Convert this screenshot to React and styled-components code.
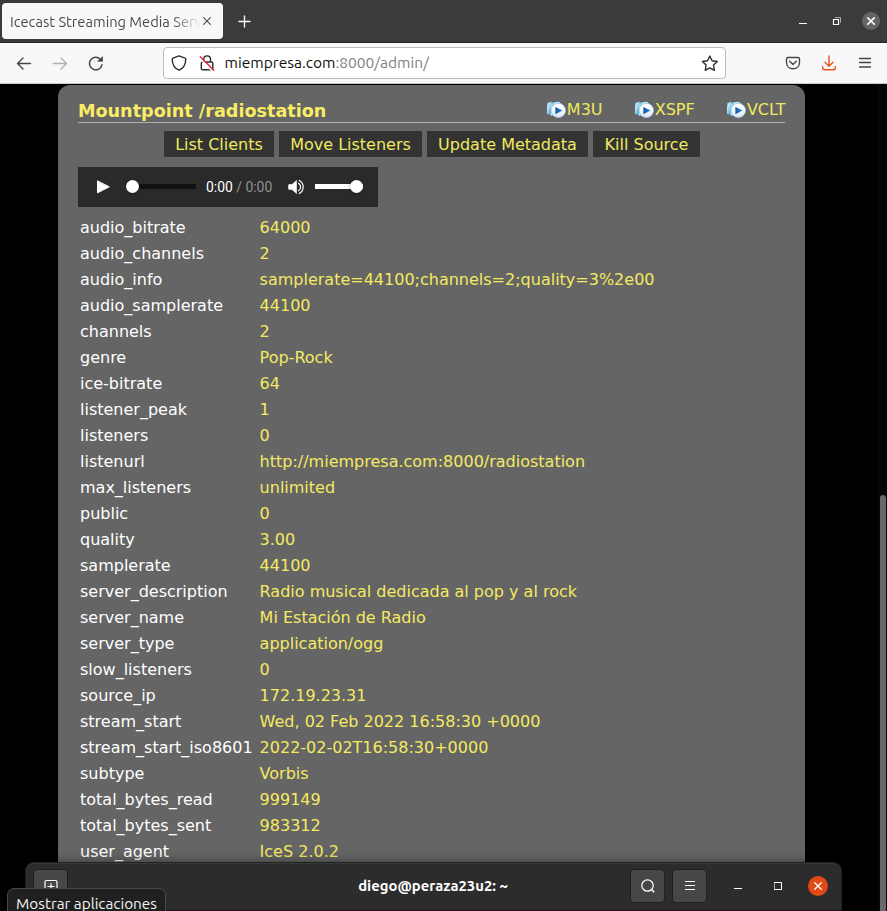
import React from "react";
import styled, { createGlobalStyle } from "styled-components";

const GlobalStyle = createGlobalStyle`
  * { box-sizing: border-box; }
  html, body { margin: 0; height: 100%; overflow: hidden; background: #000; }
`;

const ui = `"Ubuntu", "Noto Sans", sans-serif`;
const page = `"DejaVu Sans", sans-serif`;

const Screen = styled.div`
  position: relative;
  width: 887px;
  height: 911px;
  overflow: hidden;
  display: flex;
  flex-direction: column;
  background: #000;
  font-family: ${ui};
`;

const Icon = styled.svg`
  display: block;
  flex: none;
  fill: none;
  stroke: currentColor;
  stroke-linecap: ${(p) => p.$cap || "round"};
  stroke-linejoin: ${(p) => p.$join || "round"};
`;

const TabBar = styled.header`
  flex: none;
  height: 43px;
  display: flex;
  align-items: flex-start;
  background: #3d3b39;
  border-bottom: 1px solid #262524;
  color: #fff;
`;

const Tab = styled.div`
  width: 221px;
  height: 36px;
  margin: 3px 0 0 2px;
  padding: 0 12px 0 8px;
  display: flex;
  align-items: center;
  justify-content: space-between;
  border-radius: 4px;
  background: #f8f8f8;
  color: #4a4a4a;
`;

const TabTitle = styled.span`
  width: 192px;
  padding-top: 1px;
  white-space: nowrap;
  font-size: 14.67px;
  line-height: 24px;
  background: linear-gradient(90deg, #464646 162px, transparent 191px);
  background-clip: text;
  color: transparent;
`;

const NewTab = styled.div`
  padding: 15px 0 0 15px;
`;

const WindowControls = styled.div`
  display: flex;
  align-items: center;
  gap: 21px;
  margin-left: auto;
  height: 42px;
  padding-right: 7px;
`;

const CloseButton = styled.div`
  width: ${(p) => p.$size}px;
  height: ${(p) => p.$size}px;
  margin-left: ${(p) => p.$pull || 0}px;
  flex: none;
  border-radius: 50%;
  display: grid;
  place-items: center;
  color: #fff;
  background: ${(p) => p.$tone};
`;

const Toolbar = styled.nav`
  flex: none;
  height: 41px;
  padding: 0 14px 0 16px;
  display: flex;
  align-items: center;
  background: #f8f8f8;
  border-bottom: 1px solid #cacaca;
  color: #464646;
`;

const NavGroup = styled.div`
  display: flex;
  gap: 20px;
  width: 147px;
`;

const AddressBar = styled.div`
  width: 563px;
  height: 32px;
  padding: 0 7px 0 7px;
  display: flex;
  align-items: center;
  border: 1px solid #bcbcbc;
  border-radius: 4px;
  background: #fff;
  color: #2b2b2b;
`;

const Url = styled.span`
  flex: 1;
  margin-left: 9.5px;
  font-size: 15.55px;
  line-height: 24px;
  color: #808080;
`;

const Host = styled.span`
  color: #101010;
`;

const Lock = styled.div`
  margin-left: 12px;
`;

const ToolbarEnd = styled.div`
  margin-left: auto;
  display: flex;
  align-items: center;
  gap: 20px;
`;

const Viewport = styled.main`
  flex: 1;
  min-height: 0;
  display: flex;
  padding: 1px 0 0 58px;
  font-family: ${page};
  font-size: 16px;
`;

const Panel = styled.section`
  width: 747px;
  height: 860px;
  padding: 13px 20px 0;
  border-radius: 12px;
  background: #656565;
`;

const ScrollTrack = styled.div`
  width: 10px;
  margin: -1px 0 0 auto;
  padding: 411px 0 0 3px;
  background: #050507;
`;

const ScrollThumb = styled.div`
  width: 6px;
  height: 500px;
  border-radius: 3px;
  background: #686868;
`;

const MountHeader = styled.div`
  height: 25px;
  display: flex;
  align-items: flex-start;
  justify-content: space-between;
  border-bottom: 1px solid #b0b0b0;
  color: #f9ed65;
`;

const MountTitle = styled.h3`
  margin: 2px 0 0;
  font-size: 17.6px;
  line-height: 22px;
  font-weight: bold;
`;

const Playlists = styled.div`
  display: flex;
  gap: 31.2px;
  margin-right: -0.5px;
`;

const PlaylistLink = styled.a`
  display: flex;
  line-height: 24px;
  color: #efe95f;
`;

const StreamIcon = styled(Icon)`
  margin: 2px 0 0;
`;

const Actions = styled.div`
  display: flex;
  justify-content: center;
  gap: 5px;
  margin: 8px 0 10px;
  padding-left: 1px;
`;

const Action = styled.a`
  width: ${(p) => p.$width}px;
  height: 26px;
  text-align: center;
  line-height: 28px;
  white-space: nowrap;
  background: #333;
  color: #efe95f;
`;

const Player = styled.div`
  width: 300px;
  height: 40px;
  padding: 0 15px 0 18px;
  display: flex;
  align-items: center;
  background: #2a2a2a;
  color: #fff;
`;

const Slider = styled.div`
  width: ${(p) => p.$width}px;
  height: 13px;
  margin: -1px 0 0 ${(p) => p.$before}px;
  display: flex;
  align-items: center;
  justify-content: ${(p) => (p.$full ? "flex-end" : "flex-start")};
  background: linear-gradient(${(p) => (p.$full ? "#fff, #fff" : "#111, #111")}) center / 100% 5px no-repeat;
  border-radius: 3px;
`;

const Knob = styled.div`
  width: 13px;
  height: 13px;
  border-radius: 50%;
  background: #fff;
  box-shadow: 0 0 3px #0008;
`;

const Time = styled.span`
  width: 67px;
  margin: 0 14px 0 10px;
  font: 13.9px/20px Roboto, sans-serif;
  white-space: nowrap;
`;

const Duration = styled.span`
  color: #929292;
`;

const Stats = styled.dl`
  margin: 8px 0 0 2px;
  display: grid;
  grid-template-columns: 179.6px 1fr;
  grid-auto-rows: 26px;
  line-height: 26px;
  white-space: nowrap;
`;

const Key = styled.dt`
  color: #fff;
`;

const Value = styled.dd`
  margin: 0;
  color: #f4ea63;
`;

const Terminal = styled.aside`
  position: absolute;
  left: 25px;
  top: 862px;
  width: 817px;
  height: 49px;
  padding: 6px 13px 0 7px;
  display: grid;
  grid-template-columns: 1fr auto 1fr;
  align-items: start;
  border: 1px solid #222;
  border-bottom: 1px solid #300a24;
  border-radius: 9px 9px 0 0;
  background: #2c2c2c;
  box-shadow: inset 0 1px #393939, 0 0 12px #0007;
  color: #fff;
`;

const TerminalTitle = styled.strong`
  padding: 5px 0 0 5px;
  font-size: 14.85px;
  line-height: 24px;
`;

const HeaderButton = styled.div`
  width: 35px;
  height: 34px;
  display: grid;
  place-items: center;
  border: 1px solid #202020;
  border-radius: 4px;
  background: #474747;
`;

const TerminalTools = styled.div`
  display: flex;
  justify-content: flex-end;
  align-items: center;
  gap: 7px;
`;

const TerminalControls = styled.div`
  display: flex;
  align-items: center;
  gap: 31px;
  margin-left: 19px;
`;

const Tooltip = styled.div`
  position: absolute;
  left: 7px;
  top: 888px;
  width: 159px;
  height: 30px;
  padding-left: 8px;
  border: 1px solid #494949;
  border-radius: 7px;
  background: #202020;
  color: #f4f4f4;
  font-size: 15.3px;
  line-height: 30px;
  white-space: nowrap;
`;

const stats = [
  ["audio_bitrate", "64000"],
  ["audio_channels", "2"],
  ["audio_info", "samplerate=44100;channels=2;quality=3%2e00"],
  ["audio_samplerate", "44100"],
  ["channels", "2"],
  ["genre", "Pop-Rock"],
  ["ice-bitrate", "64"],
  ["listener_peak", "1"],
  ["listeners", "0"],
  ["listenurl", "http://miempresa.com:8000/radiostation"],
  ["max_listeners", "unlimited"],
  ["public", "0"],
  ["quality", "3.00"],
  ["samplerate", "44100"],
  ["server_description", "Radio musical dedicada al pop y al rock"],
  ["server_name", "Mi Estación de Radio"],
  ["server_type", "application/ogg"],
  ["slow_listeners", "0"],
  ["source_ip", "172.19.23.31"],
  ["stream_start", "Wed, 02 Feb 2022 16:58:30 +0000"],
  ["stream_start_iso8601", "2022-02-02T16:58:30+0000"],
  ["subtype", "Vorbis"],
  ["total_bytes_read", "999149"],
  ["total_bytes_sent", "983312"],
  ["user_agent", "IceS 2.0.2"],
];

const actions = [
  ["List Clients", 110],
  ["Move Listeners", 143],
  ["Update Metadata", 161],
  ["Kill Source", 107],
];

function Cross({ size = 8, weight = 1.4 }) {
  return (
    <Icon width={size} height={size} viewBox="0 0 8 8" strokeWidth={weight} $cap="butt">
      <path d="M.3.3l7.4 7.4M7.7.3L.3 7.7" />
    </Icon>
  );
}

function PlaylistIcon() {
  return (
    <StreamIcon width="21" height="19" viewBox="0 0 21 19">
      <defs>
        <linearGradient id="sheet" x2="1" y2="1">
          <stop stopColor="#438bad" />
          <stop offset=".3" stopColor="#c1effc" />
          <stop offset="1" stopColor="#2589cc" />
        </linearGradient>
        <linearGradient id="disc" x2="0" y2="1">
          <stop stopColor="#fff" />
          <stop offset=".6" stopColor="#f4f8fd" />
          <stop offset="1" stopColor="#d3e2f2" />
        </linearGradient>
        <linearGradient id="arrow" x2="1">
          <stop stopColor="#12559b" />
          <stop offset="1" stopColor="#2f93da" />
        </linearGradient>
      </defs>
      <path d="M1 3l4-1v13l-4-1z" fill="url(#sheet)" stroke="none" />
      <path d="M5 2l8-1 2 2v11l-10 2z" fill="url(#sheet)" stroke="none" />
      <path d="M5 2l8-1 2 2" stroke="#525b60" strokeWidth="1" />
      <path d="M5 2v13" stroke="#d6edf4" strokeWidth=".7" />
      <circle cx="12.4" cy="10.500" r="7.200" fill="url(#disc)" stroke="#9dbfe0" strokeWidth=".7" />
      <path d="M9.400 6.900l7.200 3.600-7.200 3.700z" fill="url(#arrow)" stroke="none" />
    </StreamIcon>
  );
}

function Browser() {
  return (
    <>
      <TabBar>
        <Tab>
          <TabTitle>Icecast Streaming Media Serv</TabTitle>
          <Cross weight={1.1} />
        </Tab>
        <NewTab>
          <Icon width="13" height="13" viewBox="0 0 13 13" strokeWidth="1.3">
            <path d="M6.5 1v11M1 6.5h11" />
          </Icon>
        </NewTab>
        <WindowControls>
          <Icon width="16" height="16" viewBox="0 0 16 16" $cap="butt">
            <path d="M5 10.5h8" />
          </Icon>
          <Icon width="10" height="10" viewBox="0 0 10 10" $join="miter" $cap="butt">
            <path d="M2.5 3.5h5v5h-5z" strokeWidth="1.2" />
            <path d="M4 1.500h5.500V7" stroke="#aaa" />
          </Icon>
          <CloseButton $size={18} $tone="#656565">
            <Cross weight={1.6} />
          </CloseButton>
        </WindowControls>
      </TabBar>
      <Toolbar>
        <NavGroup>
          <Icon width="16" height="16" viewBox="0 0 16 16" strokeWidth="1.4">
            <path d="M14.5 8.500h-13M7 3L1.500 8.500 7 14" />
          </Icon>
          <Icon width="16" height="16" viewBox="0 0 16 16" strokeWidth="1.4" opacity=".4">
            <path d="M1.500 8.500h13M9 3l5.500 5.500L9 14" />
          </Icon>
          <Icon width="16" height="16" viewBox="0 0 16 16" strokeWidth="1.5">
            <path d="M14 9.700A6.300 6.300 0 1 1 12.200 4L14 5.500" />
            <path d="M10 6.200h4.500V2z" fill="currentColor" strokeWidth=".7" />
          </Icon>
        </NavGroup>
        <AddressBar>
          <Icon width="16" height="16" viewBox="0 0 16 16" strokeWidth="1.4">
            <path d="M8 .9l6 2.2c.6.2.8.6.8 1.1-.2 5-2.4 9.2-6.8 11-4.4-1.8-6.6-6-6.8-11 0-.5.2-.9.8-1.1z" />
          </Icon>
          <Lock>
            <Icon width="16" height="16" viewBox="0 0 16 16" strokeWidth="1.4">
              <path d="M4.7 7V4.3a3.4 3.4 0 0 1 6.8 0V7M3.6 7h8.9c.8 0 1.3.5 1.3 1.3v5.2c0 .8-.5 1.3-1.3 1.3H3.6c-.8 0-1.3-.5-1.3-1.3V8.3c0-.8.5-1.3 1.3-1.3z" />
              <path d="M1 3.800l11.600 11.600" stroke="#fff" strokeWidth="1.500" />
              <path d="M1.300 1.700l13.500 13.500" stroke="#e22850" strokeWidth="1.400" />
            </Icon>
          </Lock>
          <Url>
            <Host>miempresa.com</Host>:8000/admin/
          </Url>
          <Icon width="17" height="17" viewBox="0 0 16 16" strokeWidth="1.3">
            <path d="M8.300 1l2.100 4.400 4.900.7-3.500 3.400.8 4.900-4.300-2.300L4 14.400l.8-4.900-3.500-3.400 4.900-.7z" />
          </Icon>
        </AddressBar>
        <ToolbarEnd>
          <Icon width="16" height="16" viewBox="0 0 16 16" strokeWidth="1.4">
            <path d="M3 2.5h10c1 0 1.5.6 1.5 1.5v3.5c0 3.7-2.7 6.2-6.5 6.2S1.5 11.200 1.500 7.500V4c0-.9.5-1.500 1.500-1.500z" />
            <path d="M4.700 6.300L8 9.400l3.300-3.100" />
          </Icon>
          <Icon width="16" height="16" viewBox="0 0 16 16" strokeWidth="1.4" color="#e95420">
            <path d="M8 1v10M4 7.300L8 11.200l4-3.900M1.700 11.500v1.300c0 1.200.7 1.900 1.900 1.900h8.800c1.200 0 1.900-.7 1.900-1.900v-1.300" />
          </Icon>
          <Icon width="16" height="16" viewBox="0 0 16 16" strokeWidth="1.3">
            <path d="M2.500 3.500h11M2.500 7.500h11M2.500 12h11" />
          </Icon>
        </ToolbarEnd>
      </Toolbar>
    </>
  );
}

function AudioPlayer() {
  return (
    <Player>
      <Icon width="14" height="14" viewBox="0 0 14 14">
        <path d="M1.500 1.200v11.600L13 7z" fill="currentColor" />
      </Icon>
      <Slider $width={70} $before={16}>
        <Knob />
      </Slider>
      <Time>
        0:00 <Duration>/ 0:00</Duration>
      </Time>
      <Icon width="18" height="16" viewBox="0 0 18 16" strokeWidth="1.200">
        <path d="M2.500 5.500H5L9.500 1.500v13L5 10.500H2.500c-.7 0-1-.3-1-1v-3c0-.7.3-1 1-1z" fill="currentColor" strokeWidth=".6" />
        <path d="M11.500 4.200a4.500 4.500 0 0 1 0 7.600M12.300 1.500a7.400 7.400 0 0 1 0 13" />
      </Icon>
      <Slider $width={48} $before={10} $full>
        <Knob />
      </Slider>
    </Player>
  );
}

function MountPanel() {
  return (
    <Panel>
      <MountHeader>
        <MountTitle>Mountpoint /radiostation</MountTitle>
        <Playlists>
          {["M3U", "XSPF", "VCLT"].map((name) => (
            <PlaylistLink key={name}>
              <PlaylistIcon />
              {name}
            </PlaylistLink>
          ))}
        </Playlists>
      </MountHeader>
      <Actions>
        {actions.map(([label, width]) => (
          <Action key={label} $width={width}>{label}</Action>
        ))}
      </Actions>
      <AudioPlayer />
      <Stats>
        {stats.map(([key, value]) => (
          <React.Fragment key={key}>
            <Key>{key}</Key>
            <Value>{value}</Value>
          </React.Fragment>
        ))}
      </Stats>
    </Panel>
  );
}

function TerminalWindow() {
  return (
    <Terminal>
      <HeaderButton>
        <Icon width="14" height="14" viewBox="0 0 14 14" strokeWidth="1.200">
          <path d="M3 13.500H2.500c-1 0-1.500-.5-1.500-1.500V3c0-1 .5-1.500 1.500-1.500h9c1 0 1.500.5 1.500 1.500v9c0 1-.5 1.500-1.500 1.500H11M7 4.500v6M4 7.500h6" />
        </Icon>
      </HeaderButton>
      <TerminalTitle>diego@peraza23u2: ~</TerminalTitle>
      <TerminalTools>
        <HeaderButton>
          <Icon width="16" height="16" viewBox="0 0 16 16" strokeWidth="1.200">
            <circle cx="7.500" cy="7.500" r="5.700" />
            <path d="M11.800 11.800l1.900 1.900" strokeWidth="1.600" />
          </Icon>
        </HeaderButton>
        <HeaderButton>
          <Icon width="12" height="12" viewBox="0 0 12 12" $cap="butt">
            <path d="M1 1.500h10M1 5.500h10M1 9.500h10" />
          </Icon>
        </HeaderButton>
        <TerminalControls>
          <Icon width="10" height="10" viewBox="0 0 10 10" $cap="butt">
            <path d="M1 7.500h8" />
          </Icon>
          <Icon width="8" height="8" viewBox="0 0 8 8" $join="miter">
            <path d="M.5.5h7v7h-7z" />
          </Icon>
          <CloseButton $size={20} $tone="#df4a16" $pull={-5}>
            <Cross weight={1.300} />
          </CloseButton>
        </TerminalControls>
      </TerminalTools>
    </Terminal>
  );
}

export default function App() {
  return (
    <Screen>
      <GlobalStyle />
      <Browser />
      <Viewport>
        <MountPanel />
        <ScrollTrack>
          <ScrollThumb />
        </ScrollTrack>
      </Viewport>
      <TerminalWindow />
      <Tooltip>Mostrar aplicaciones</Tooltip>
    </Screen>
  );
}
